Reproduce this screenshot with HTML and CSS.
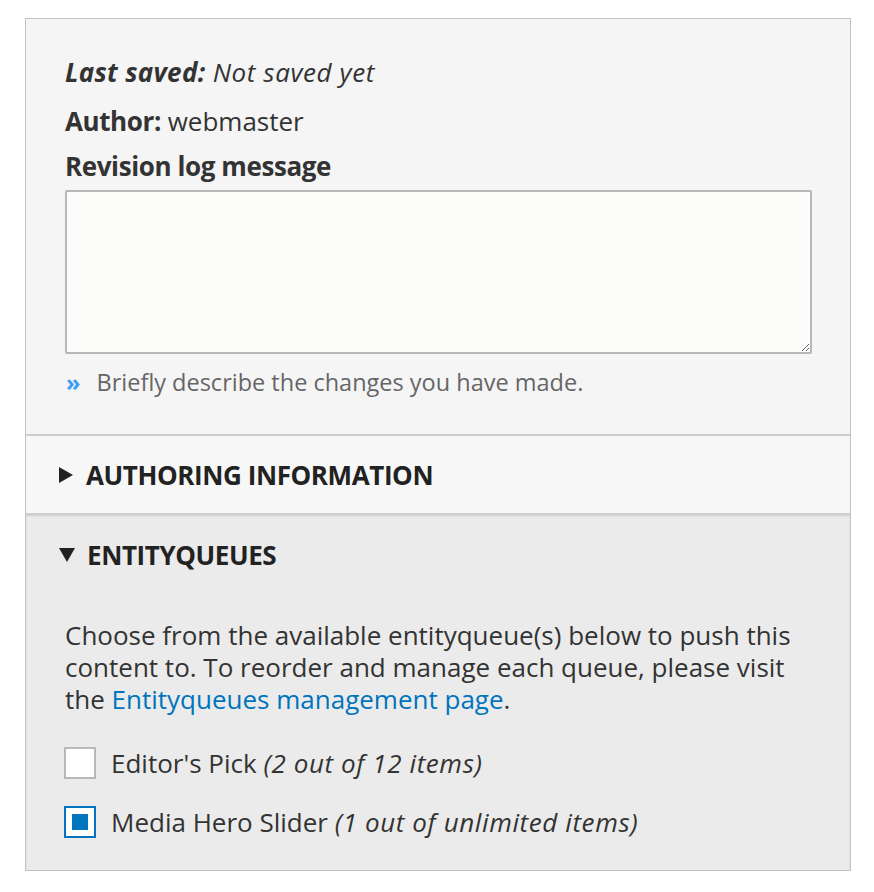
FILE: index.html
```html
<!DOCTYPE html>
<html>
<head>
<meta charset="utf-8">
<link rel="stylesheet" href="styles.css">
</head>
<body>
<div class="sidebar">
  <div class="meta">
    <p class="meta-line first"><em><strong>Last saved:</strong> Not saved yet</em></p>
    <p class="meta-line second"><strong>Author:</strong> webmaster</p>
    <label class="field-label" for="log">Revision log message</label>
    <textarea id="log" class="log"></textarea>
    <p class="desc"><span class="raquo">»</span>Briefly describe the changes you have made.</p>
  </div>
  <div class="details closed">
    <div class="summary"><span class="tri tri-right"></span>AUTHORING INFORMATION</div>
  </div>
  <div class="details open">
    <div class="summary"><span class="tri tri-down"></span>ENTITYQUEUES</div>
    <div class="details-body">
      <p class="intro">Choose from the available entityqueue(s) below to push this content to. To reorder and manage each queue, please visit the <a href="#" class="link">Entityqueues management page</a>.</p>
      <div class="opt"><span class="box"></span><span>Editor's Pick <em>(2 out of 12 items)</em></span></div>
      <div class="opt"><span class="box checked"></span><span>Media Hero Slider <em>(1 out of unlimited items)</em></span></div>
    </div>
  </div>
</div>
</body>
</html>
```
FILE: styles.css
```css
html, body {
  margin: 0;
  padding: 0;
  background: #fff;
}
body {
  font-family: "Open Sans", "DejaVu Sans", sans-serif;
  font-size: 26px;
  color: #333;
  padding: 18px 0 0 25px;
}
em {
  letter-spacing: 0.6px;
}
strong {
  letter-spacing: -0.4px;
}
.sidebar {
  width: 824px;
  border: 1px solid #c2c2c2;
  background: #f5f5f5;
}
.meta {
  padding: 36px 39px 36px 39px;
  display: flex;
  flex-direction: column;
  border-bottom: 2px solid #cccccc;
}
.meta-line {
  margin: 0;
  line-height: 34px;
}
.meta-line.first { margin-bottom: 15px; }
.meta-line.second { margin-bottom: 11px; }
.meta-line em strong { font-weight: 700; letter-spacing: 0.3px; }
.field-label {
  font-weight: 700;
  letter-spacing: -0.4px;
  line-height: 34px;
  margin-bottom: 7px;
}
.log {
  display: block;
  box-sizing: border-box;
  width: 747px;
  height: 164px;
  border: 2px solid #b8b8b8;
  border-radius: 2px;
  background: #fcfcfa;
  resize: vertical;
  margin: 0;
  padding: 6px;
  font: inherit;
}
.desc {
  margin: 12px 0 0 0;
  color: #666;
  font-size: 23.5px;
  line-height: 32px;
}
.raquo {
  color: #3d9df5;
  font-weight: 700;
  margin: 0 16px 0 1px;
}
.details.closed {
  background: #f7f7f7;
  border-bottom: 1px solid #cfcfcf;
}
.summary {
  display: flex;
  align-items: center;
  font-weight: 700;
  font-size: 26px;
  letter-spacing: -0.4px;
  line-height: 32px;
  padding: 23px 0 22px 33px;
  color: #222;
}
.open .summary {
  padding-top: 25px;
}
.tri {
  width: 0;
  height: 0;
  margin-right: 13px;
}
.tri-right {
  border-top: 8px solid transparent;
  border-bottom: 8px solid transparent;
  border-left: 14px solid #222;
}
.tri-down {
  border-left: 8px solid transparent;
  border-right: 8px solid transparent;
  border-top: 14px solid #222;
  margin-right: 12px;
}
.details.open {
  background: #ebebeb;
  box-shadow: inset 0 2px 2px rgba(0,0,0,0.12);
}
.details-body {
  padding: 26px 39px 32px 39px;
}
.intro {
  margin: 0 0 32px 0;
  line-height: 32px;
}
.link {
  color: #0074bd;
  text-decoration: none;
}
.opt {
  display: flex;
  align-items: center;
  gap: 15px;
  line-height: 32px;
  margin-bottom: 27px;
}
.opt:last-child { margin-bottom: 0; }
.box {
  box-sizing: border-box;
  width: 32px;
  height: 32px;
  flex: none;
  margin-left: -1px;
  border: 2px solid #b8b8b8;
  background: #fff;
  display: flex;
  align-items: center;
  justify-content: center;
}
.box.checked {
  border-color: #0074bd;
}
.box.checked::after {
  content: "";
  width: 16px;
  height: 16px;
  background: #0074bd;
}
```
